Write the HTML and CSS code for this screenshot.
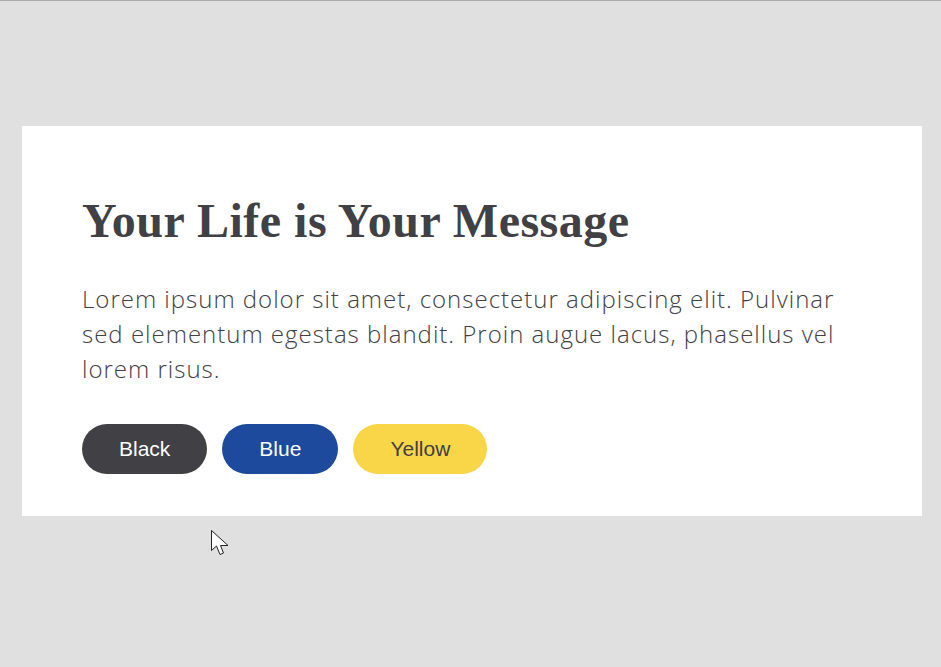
FILE: index.html
```html
<!DOCTYPE html>
<html lang="en">
<head>
<meta charset="utf-8">
<title>Your Life is Your Message</title>
<link rel="stylesheet" href="styles.css">
</head>
<body>
<main class="stage">
  <section class="card">
    <h1 class="title">Your Life is Your Message</h1>
    <p class="lead">Lorem ipsum dolor sit amet, consectetur adipiscing elit. Pulvinar sed elementum egestas blandit. Proin augue lacus, phasellus vel lorem risus.</p>
    <div class="actions">
      <button class="pill pill-black" type="button">Black</button>
      <button class="pill pill-blue" type="button">Blue</button>
      <button class="pill pill-yellow" type="button">Yellow</button>
    </div>
  </section>
</main>
<svg class="cursor" width="19" height="26" viewBox="0 0 19 26" aria-hidden="true">
  <path d="M0.5 0.5 L0.5 20.5 L5.5 16 L9 24.5 L12.5 23 L9.5 15.5 L17 15.5 Z" fill="#fff" stroke="#222" stroke-width="1" stroke-linejoin="miter"/>
</svg>
</body>
</html>
```
FILE: styles.css
```css
html, body {
  margin: 0;
  padding: 0;
}
body {
  background: #e0e0e0;
  border-top: 1px solid #ababab;
  min-height: 666px;
  position: relative;
}
.stage {
  padding: 125px 19px 0 22px;
}
.card {
  width: 900px;
  box-sizing: border-box;
  background: #ffffff;
  padding: 67px 60px 42px 60px;
}
.title {
  margin: 0 0 32px 0;
  font-family: "Liberation Serif", "Times New Roman", serif;
  font-weight: 700;
  font-size: 48px;
  line-height: 56px;
  letter-spacing: 0.5px;
  color: #414045;
}
.lead {
  margin: 0 0 38px 0;
  font-family: "Open Sans", sans-serif;
  font-weight: 300;
  font-size: 24px;
  line-height: 35px;
  letter-spacing: 1px;
  color: #414045;
}
.actions {
  display: flex;
  gap: 15px;
}
.pill {
  height: 50px;
  border: none;
  border-radius: 25px;
  font-family: "Liberation Sans", Arial, sans-serif;
  font-size: 21px;
  padding: 0 37px;
  cursor: pointer;
}
.pill-black { background: #414045; color: #ffffff; }
.pill-blue { background: #1d4a9c; color: #ffffff; }
.pill-yellow { background: #f9d648; color: #414045; }
.cursor {
  position: absolute;
  left: 211px;
  top: 529px;
}
```
